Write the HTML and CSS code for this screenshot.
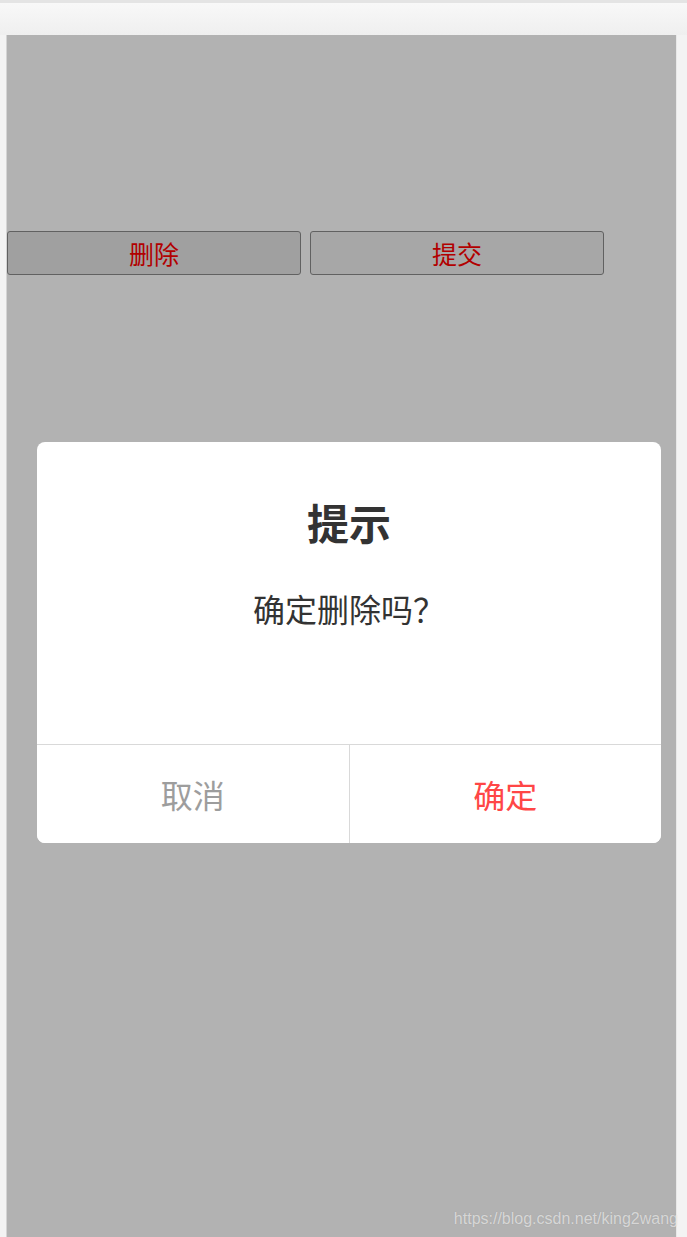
FILE: index.html
```html
<!DOCTYPE html>
<html lang="zh-CN">
<head>
  <meta charset="UTF-8">
  <title>删除确认</title>
  <link rel="stylesheet" href="styles.css">
</head>
<body>
  <!-- barra do navegador -->
  <div class="toolbar"></div>

  <div class="frame">
    <div class="screen">
      <div class="actions">
        <button class="btn btn-del">删除</button>
        <button class="btn">提交</button>
      </div>

      <!-- modal -->
      <div class="mask">
        <div class="dialog">
          <div class="dialog-body">
            <h2 class="dialog-title">提示</h2>
            <p class="dialog-msg">确定删除吗？</p>
          </div>
          <div class="dialog-foot">
            <button class="dialog-btn cancel">取消</button>
            <button class="dialog-btn confirm">确定</button>
          </div>
        </div>
      </div>
    </div>
  </div>

  <span class="watermark">https://blog.csdn.net/king2wang</span>
</body>
</html>
```

FILE: styles.css
```css
body {
  margin: 0;
  height: 1237px;
  overflow: hidden;
  background: #f3f3f3;
  font-family: "Noto Sans CJK SC", "Liberation Sans", sans-serif;
  position: relative;
}

.toolbar {
  height: 32px;
  border-top: 3px solid #e4e4e4;
  background: linear-gradient(to bottom, #f8f8f8, #efefef);
}

.frame {
  display: flex;
}

.screen {
  position: relative;
  width: 669px;
  height: 1202px;
  margin-left: 6px;
  border-left: 1px solid #d4d4d4;
  border-right: 1px solid #e8e8e8;
  background: #fff;
}

.actions {
  display: flex;
  gap: 9px;
  padding-top: 196px;
}

.btn {
  width: 294px;
  height: 44px;
  box-sizing: border-box;
  border: 1px solid #8c8c8c;
  border-radius: 3px;
  background: #efefef;
  color: #ff0000;
  font-family: inherit;
  font-size: 25px;
  line-height: 1;
  padding: 0;
}

.btn-del {
  background: #e5e5e5;
}

.mask {
  position: absolute;
  top: 0;
  left: 0;
  right: 0;
  bottom: 0;
  background: rgba(0, 0, 0, 0.3);
  padding: 407px 0 0 30px;
  box-sizing: border-box;
}

.dialog {
  width: 624px;
  background: #fff;
  border-radius: 8px;
  overflow: hidden;
}

.dialog-body {
  padding: 51px 0 114px;
  text-align: center;
  color: #333;
}

.dialog-title {
  margin: 0;
  font-size: 42px;
  font-weight: bold;
  line-height: 58px;
}

.dialog-msg {
  margin: 35px 0 0;
  font-size: 32px;
  line-height: 44px;
}

.dialog-foot {
  display: flex;
  border-top: 1px solid #d9d9d9;
}

.dialog-btn {
  flex: 1;
  height: 98px;
  border: none;
  background: #fff;
  font-family: inherit;
  font-size: 32px;
  padding: 0;
}

.cancel {
  color: #9d9d9d;
  border-right: 1px solid #d9d9d9;
}

.confirm {
  color: #ff4646;
}

.watermark {
  position: absolute;
  right: 9px;
  bottom: 9px;
  font-family: "Liberation Sans", Arial, sans-serif;
  font-size: 16px;
  color: rgba(255, 255, 255, 0.6);
  text-shadow: 0 0 1px rgba(0, 0, 0, 0.15);
}
```
